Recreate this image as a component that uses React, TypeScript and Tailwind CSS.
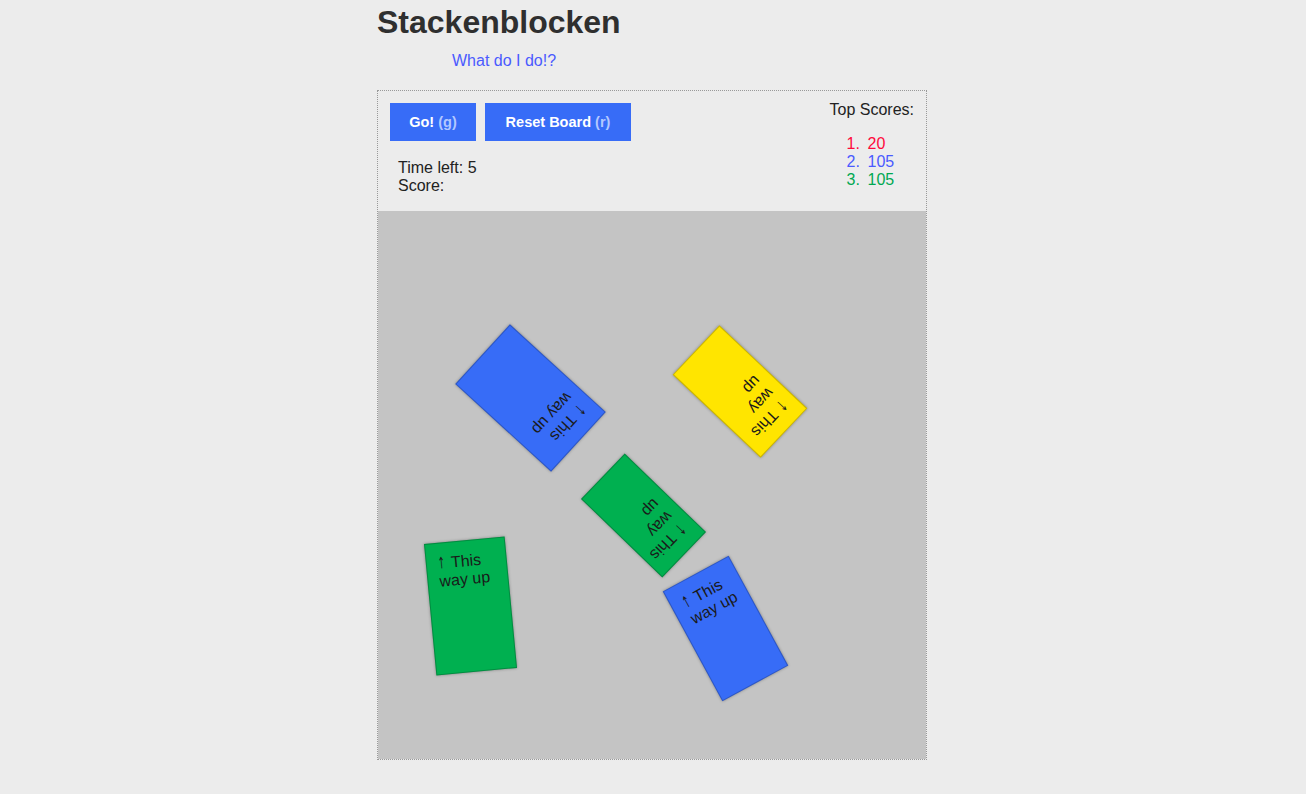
import React from "react";

type Block = {
  left: number;
  top: number;
  w: number;
  h: number;
  rot: number;
  color: string;
  lines: string[];
};

// positions on the board, rotation around centre
const blocks: Block[] = [
  { left: 112, top: 122, w: 81, h: 130, rot: 132.5, color: "bg-[#376cf7]", lines: ["This", "way up"] },
  { left: 328, top: 120, w: 68, h: 121, rot: 133.4, color: "bg-[#ffe500]", lines: ["This", "way", "up"] },
  { left: 234, top: 248, w: 63, h: 113, rot: 134, color: "bg-[#00b050]", lines: ["This", "way", "up"] },
  { left: 52, top: 329, w: 81, h: 132, rot: -5.4, color: "bg-[#00b050]", lines: ["This", "way up"] },
  { left: 310, top: 355, w: 75, h: 125, rot: -28.5, color: "bg-[#376cf7]", lines: ["This", "way up"] },
];

const scores = [
  { n: "1.", v: "20", cls: "text-[#ff0a3c]" },
  { n: "2.", v: "105", cls: "text-[#4a5aff]" },
  { n: "3.", v: "105", cls: "text-[#00a852]" },
];

const BlockCard: React.FC<{ block: Block }> = ({ block }) => (
  <div
    className={`absolute box-border border border-black/20 shadow-[0_0_3px_rgba(0,0,0,0.35)] px-[11px] py-[11px] text-[16px] leading-[18px] text-[#1a1a1a] whitespace-nowrap ${block.color}`}
    style={{
      left: block.left,
      top: block.top,
      width: block.w,
      height: block.h,
      transform: `rotate(${block.rot}deg)`,
    }}
  >
    {block.lines.map((line, i) => (
      <div key={i}>
        {i === 0 && (
          <span className="inline-block text-[16px] font-['DejaVu_Sans',sans-serif] scale-x-[0.55] origin-left w-[8px] mr-[1px]">↑</span>
        )}
        {i === 0 ? " " : ""}
        {line}
      </div>
    ))}
  </div>
);

const Key: React.FC<{ label: string; hint: string; width: string }> = ({ label, hint, width }) => (
  <button
    type="button"
    className={`h-[38px] pt-[2px] text-center bg-[#376cf7] text-white font-bold text-[14.5px] font-['Liberation_Sans',Arial,sans-serif] ${width}`}
  >
    {label} <span className="text-[#b3c8ff]">{hint}</span>
  </button>
);

export default function App() {
  return (
    <div className="min-h-[794px] bg-[#ececec] font-['Liberation_Sans',Arial,sans-serif] text-[#222]">
      <div className="mx-auto w-[552px] pt-[4px] pr-[2px]">
        <h1 className="text-[32px] leading-[37px] font-bold text-[#2f2f2f]">Stackenblocken</h1>
        <a href="#" className="block mt-[11px] ml-[75px] w-fit text-[16px] leading-[18px] text-[#4a5aff]">
          What do I do!?
        </a>

        <div className="mt-[20px] w-[550px] border border-dotted border-[#999]">
          <div className="h-[120px] flex justify-between px-[12px]">
            <div className="pt-[12px]">
              <div className="flex gap-[9px]">
                <Key label="Go!" hint="(g)" width="w-[86px]" />
                <Key label="Reset Board" hint="(r)" width="w-[146px]" />
              </div>
              <div className="mt-[18px] ml-[8px] text-[16px] leading-[18px]">
                <div>Time left: 5</div>
                <div>Score:</div>
              </div>
            </div>
            <div className="pt-[10px] text-[16px] leading-[18px]">
              <div>Top Scores:</div>
              <ol className="mt-[16px] pl-[17px]">
                {scores.map((s) => (
                  <li key={s.n} className={`flex ${s.cls}`}>
                    <span className="w-[21px]">{s.n}</span>
                    <span>{s.v}</span>
                  </li>
                ))}
              </ol>
            </div>
          </div>

          <div className="relative h-[548px] bg-[#c4c4c4] overflow-hidden">
            {blocks.map((b, i) => (
              <BlockCard key={i} block={b} />
            ))}
          </div>
        </div>
      </div>
    </div>
  );
}
